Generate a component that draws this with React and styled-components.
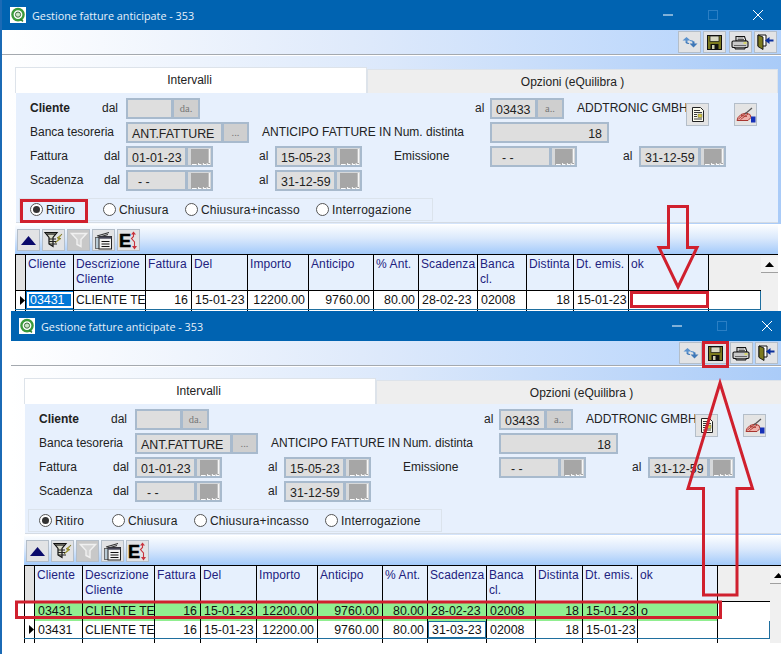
import React from "react";
import styled, { createGlobalStyle } from "styled-components";

const Global = createGlobalStyle`
  html, body { margin: 0; padding: 0; background: #fff; }
  body { font-family: "Liberation Sans", Arial, sans-serif; font-size: 12px; color: #222; }
`;

const Desktop = styled.div`
  position: relative;
  width: 781px;
  height: 654px;
  overflow: hidden;
  background: #fff;
`;

const WindowFrame = styled.div`
  position: absolute;
  left: ${(p) => p.$left}px;
  top: ${(p) => p.$top}px;
  width: 781px;
  height: ${(p) => p.$height}px;
  box-sizing: border-box;
  background: #fff;
  border-left: 2px solid #1b6ab5;
  overflow: hidden;
  ${(p) => p.$clip && "clip-path: inset(0 0 0 2px);"}
`;

const TitleBar = styled.div`
  height: 30px;
  background: #0063b1;
  display: flex;
  align-items: center;
  padding-left: 8px;
  color: #e8f1fa;
  font-family: "Open Sans", "Noto Sans", sans-serif;
  font-size: 10.8px;
`;

const TitleText = styled.span`
  margin-left: 6px;
  flex: 1;
`;

const WinControls = styled.div`
  display: flex;
  align-items: center;
  width: 118px;
`;

const WinControl = styled.svg`
  width: 10px;
  height: 10px;
  margin-right: 35px;
  flex: none;
  overflow: visible;
`;

const TopBar = styled.div`
  height: 25px;
  box-sizing: border-box;
  border-bottom: 1px solid #a4a9af;
  background: linear-gradient(90deg, #ffffff 0%, #dfeafb 45%, #b2d2fc 100%);
  display: flex;
  justify-content: flex-end;
  align-items: center;
  gap: 2.3px;
  padding-right: ${(p) => p.$right}px;
`;

const ToolButton = styled.div`
  width: 23px;
  height: 22px;
  box-sizing: border-box;
  background: ${(p) => (p.$disabled ? "#c8c8c8" : "#e2e3e5")};
  border: 1px solid #b4bec9;
  display: flex;
  align-items: center;
  justify-content: center;
  flex: none;
`;

const Body = styled.div`
  background: linear-gradient(90deg, #ffffff 0%, #dbe8fb 50%, #a9cbf8 100%) top / 100% 168px no-repeat;
  border-top: 1px solid #fff;
  padding: 11px 3px 0 13px;
`;

const Tabs = styled.div`
  display: flex;
  align-items: flex-end;
  height: 26px;
`;

const Tab = styled.div`
  height: ${(p) => (p.$active ? 26 : 24)}px;
  width: ${(p) => (p.$active ? "352px" : "auto")};
  flex: ${(p) => (p.$active ? "none" : 1)};
  box-sizing: border-box;
  background: ${(p) => (p.$active ? "#fff" : "#eeeeee")};
  border: 1px solid #dde3ea;
  border-bottom: none;
  padding-top: 5px;
  padding-right: ${(p) => (p.$active ? 3 : 0)}px;
  text-align: center;
  color: #222;
`;

const Panel = styled.div`
  height: 130px;
  box-sizing: border-box;
  margin-left: 1px;
  background: #e7f0fd;
  border-bottom: 1px solid #d4dbe4;
  padding: 5px 0 0 3px;
`;

const FormRow = styled.div`
  height: 24px;
  display: flex;
  align-items: flex-start;
`;

const Label = styled.span`
  width: ${(p) => p.$w}px;
  flex: none;
  line-height: 20px;
  font-weight: ${(p) => (p.$bold ? "bold" : "normal")};
  white-space: nowrap;
  padding-left: ${(p) => p.$pad || 0}px;
  box-sizing: border-box;
`;

const Field = styled.div`
  width: ${(p) => p.$w}px;
  height: 21px;
  flex: none;
  box-sizing: border-box;
  background: #dedede;
  border: 2px solid #a8bacd;
  line-height: 20px;
  padding: 0 ${(p) => (p.$right ? 5 : 4)}px 0 ${(p) => (p.$dash ? 10 : 4)}px;
  font-size: 12.4px;
  color: #222;
  white-space: nowrap;
  overflow: hidden;
  text-align: ${(p) => (p.$right ? "right" : "left")};
`;

const LookupButton = styled.div`
  width: ${(p) => p.$w}px;
  height: 21px;
  flex: none;
  box-sizing: border-box;
  background: #cfcfcf;
  border: 2px solid #a8bacd;
  border-left-width: 1px;
  text-align: center;
  line-height: 18px;
  font-family: "Liberation Serif", serif;
  font-size: 10.5px;
  color: #777;
`;

const CalendarButton = styled.div`
  width: 26px;
  height: 21px;
  flex: none;
  box-sizing: border-box;
  background: #d6d8da;
  border: 2px solid #a8bacd;
  border-left-width: 1px;
  padding: 1px 1px 0 3px;
  display: flex;
`;

const IconButton = styled.div`
  width: 23px;
  height: 23px;
  flex: none;
  margin-top: 5px;
  margin-left: ${(p) => p.$ml || 0}px;
  box-sizing: border-box;
  background: #e4e4e4;
  border: 1px solid #b4bec9;
  display: flex;
  align-items: center;
  justify-content: center;
`;

const RadioBox = styled.div`
  width: 414px;
  height: 23px;
  margin-top: 4px;
  box-sizing: border-box;
  border: 1px solid #dbe3ec;
  display: flex;
  align-items: center;
`;

const RadioItem = styled.label`
  display: flex;
  align-items: center;
  width: ${(p) => p.$w}px;
  flex: none;
  padding-left: ${(p) => p.$pad || 0}px;
  box-sizing: border-box;
  letter-spacing: 0.2px;
`;

const RadioDot = styled.span`
  width: 13px;
  height: 13px;
  box-sizing: border-box;
  border-radius: 50%;
  background: #fff;
  border: 1px solid #555;
  margin-right: 3px;
  flex: none;
  display: flex;
  align-items: center;
  justify-content: center;
  &::after {
    content: "";
    width: 7px;
    height: 7px;
    border-radius: 50%;
    background: ${(p) => (p.$on ? "#333" : "transparent")};
  }
`;

const GridBar = styled.div`
  height: 29px;
  margin-top: 2px;
  box-sizing: border-box;
  background: linear-gradient(180deg, #fbfdff 0%, #dbe9fc 45%, #a3cafa 100%);
  display: flex;
  gap: 2px;
  padding: 4px 0 0 2px;
`;

const GridWrap = styled.div`
  height: ${(p) => p.$height}px;
  display: flex;
  border-top: 1px solid #000;
  overflow: hidden;
`;

const GridTable = styled.div`
  width: 746px;
  flex: none;
  background: #fff;
`;

const GridRow = styled.div`
  display: flex;
  height: ${(p) => p.$h}px;
  ${(p) => p.$line && `border-bottom: 1px solid ${p.$line};`}
`;

const Selector = styled.div`
  width: 11px;
  flex: none;
  box-sizing: border-box;
  border-left: 1px solid #000;
  border-right: 1px solid #000;
  background: ${(p) => (p.$head ? "#e2e2e2" : "#fff")};
  display: flex;
  align-items: center;
  justify-content: flex-end;
`;

const Cell = styled.div`
  width: ${(p) => p.$w}px;
  flex: none;
  box-sizing: border-box;
  border-right: 1px solid #000;
  padding: 0 ${(p) => (p.$tight ? 0 : 3)}px 0 ${(p) => (p.$tight ? 2 : 3)}px;
  white-space: nowrap;
  overflow: hidden;
  font-size: ${(p) => (p.$tight ? 12.1 : 12.4)}px;
  line-height: 18px;
  text-align: ${(p) => (p.$num ? "right" : "left")};
  background: ${(p) => (p.$bg ? p.$bg : "transparent")};
  color: #111;
`;

const HeadCell = styled(Cell)`
  background: #e6f0fd;
  color: #22227e;
  white-space: normal;
  line-height: 15px;
  padding: 2px 0 0 2px;
  font-size: 12px;
  letter-spacing: 0.1px;
`;

const HeadFiller = styled.div`
  flex: 1;
  background: #efefef;
`;

const RowFiller = styled.div`
  flex: 1;
  box-sizing: border-box;
  ${(p) => p.$line && `border-right: 1px solid ${p.$line};`}
`;

const ActiveCell = styled(Cell)`
  background: #0078d7;
  color: #fff;
  outline: 2px solid #fff;
  outline-offset: -3px;
  padding-left: 4px;
`;

const FocusCell = styled(Cell)`
  box-shadow: inset 0 0 0 1px #1f6f9f;
  padding-left: 4px;
`;

const ScrollBar = styled.div`
  width: 17px;
  flex: none;
  background: #f0f0f0;
  padding-top: 2px;
`;

const ScrollUp = styled.div`
  height: 15px;
  background: #f4f4f4;
  border-bottom: 1px solid #a0a0a0;
  display: flex;
  align-items: center;
  justify-content: center;
`;

const Overlay = styled.svg`
  position: absolute;
  left: 0;
  top: 0;
  pointer-events: none;
`;

const LogoIcon = () => (
  <svg width="16" height="16" viewBox="0 0 16 16">
    <rect width="16" height="16" fill="#fff" />
    <circle cx="8" cy="7.6" r="5.6" fill="none" stroke="#3b9a3b" strokeWidth="2.4" />
    <circle cx="8" cy="7.6" r="2.6" fill="#c9e6c4" stroke="#3f6f3f" strokeWidth="1" />
    <path d="M10 12l3 2.4" stroke="#2f7f2f" strokeWidth="1.6" />
  </svg>
);

const SyncIcon = () => (
  <svg width="16" height="14" viewBox="0 0 16 14">
    <path d="M4.5 2L0.5 5.5h3v2h2v-2h3z" fill="#5a92ce" />
    <path d="M8 5.5c1 0 3 .3 3.5 2" fill="none" stroke="#5a92ce" strokeWidth="1.2" />
    <path d="M11.5 12.5l4-4h-3v-2h-2v2h-3z" fill="#3f78b8" />
    <path d="M7 8.5c-1 0-2.5-.2-3-1.5" fill="none" stroke="#3f78b8" strokeWidth="1.2" />
  </svg>
);

const SaveIcon = () => (
  <svg width="15" height="15" viewBox="0 0 15 15">
    <rect x="0.5" y="0.5" width="14" height="14" fill="#7c7a1e" stroke="#111" />
    <rect x="3" y="1" width="9" height="5.5" fill="#d9d9c4" stroke="#111" strokeWidth="0.7" />
    <rect x="3.5" y="9" width="8" height="5.5" fill="#111" />
    <rect x="5" y="10" width="2.5" height="4" fill="#cfcfb0" />
  </svg>
);

const PrintIcon = () => (
  <svg width="18" height="15" viewBox="0 0 18 15">
    <path d="M5 6V1.5h8.5L15 6z" fill="#fff" stroke="#111" strokeWidth="1.1" />
    <path d="M6.5 3h6M6.5 4.5h6.5" stroke="#333" strokeWidth="0.8" />
    <rect x="1" y="6" width="16" height="6.5" rx="1.2" fill="#c9c9c9" stroke="#111" strokeWidth="1.1" />
    <path d="M3 10.5h12" stroke="#666" strokeWidth="1" />
    <rect x="12.5" y="7.4" width="3" height="1.2" fill="#dede30" />
    <path d="M4 12.5v1.5h10v-1.5" fill="#999" stroke="#111" />
  </svg>
);

const DoorIcon = () => (
  <svg width="17" height="16" viewBox="0 0 17 16">
    <path d="M1 1h8v11H1z" fill="#fff" stroke="#111" />
    <path d="M1 1l5 2v12.5l-5-3z" fill="#7c7a1e" stroke="#111" strokeWidth="0.9" />
    <path d="M16.5 5.5h-4V3L8 6.5 12.5 10V7.5h4z" fill="#0b2f9c" />
  </svg>
);

const TriangleUpIcon = () => (
  <svg width="15" height="9" viewBox="0 0 15 9">
    <path d="M7.5 0L15 9H0z" fill="#0a0a6b" />
  </svg>
);

const FilterEditIcon = () => (
  <svg width="19" height="18" viewBox="0 0 19 18">
    <path d="M1 1.5h12L9 6.5v9l-4-2.500V6.500z" fill="#d9d9c8" stroke="#111" strokeWidth="1.2" />
    <path d="M2.5 3h9" stroke="#111" strokeWidth="1.2" />
    <path d="M5 8h7M5 10.5h7M5 13h8" stroke="#222" strokeWidth="1.1" />
    <path d="M18 3l-5 4h2.5L11 12l6-4.500h-2.500z" fill="#e8d832" stroke="#6b6516" strokeWidth="0.6" />
  </svg>
);

const FilterIcon = () => (
  <svg width="18" height="16" viewBox="0 0 18 16">
    <path d="M1.5 1.5h15l-5.500 6v7l-4-2v-5z" fill="#d4d4d4" stroke="#f0f0f0" strokeWidth="1.4" />
  </svg>
);

const ListWindowIcon = () => (
  <svg width="19" height="19" viewBox="0 0 19 19">
    <path d="M3 5l12-3.500M2.5 7L14 3.500" stroke="#333" strokeWidth="1.1" />
    <rect x="1.5" y="6.5" width="6" height="11" fill="#b9cbd6" stroke="#555" strokeWidth="0.8" />
    <rect x="5" y="5.5" width="12.5" height="12.5" fill="#f2f2f2" stroke="#222" strokeWidth="1" />
    <rect x="5" y="5.5" width="12.5" height="2.2" fill="#445" />
    <path d="M7.5 10.5h8M7.5 13h8M7.5 15.5h8" stroke="#111" strokeWidth="1.2" />
  </svg>
);

const SortIcon = () => (
  <svg width="21" height="19" viewBox="0 0 21 19">
    <text x="1" y="16" fontFamily="Liberation Sans, sans-serif" fontWeight="900" fontSize="18" fill="#000" stroke="#000" strokeWidth="0.6">E</text>
    <path d="M15.5 0.5l-2.500 3h5z" fill="#c8323c" />
    <path d="M15.5 3v2.500l-2 2 3 3.500v4" fill="none" stroke="#c8323c" strokeWidth="1.1" />
    <path d="M16.5 18.5l2.500-3.500h-5z" fill="#c8323c" />
  </svg>
);

const DocIcon = () => (
  <svg width="12" height="15" viewBox="0 0 12 15">
    <path d="M0.5 0.5h8l3 3v11h-11z" fill="#fbfbee" stroke="#222" />
    <path d="M2 3.5h6M2 5.5h8M2 7.5h3M2 9.5h3M2 12h8" stroke="#222" strokeWidth="0.9" />
    <rect x="6" y="7" width="4" height="3.5" fill="#d8c93a" stroke="#555" strokeWidth="0.5" />
  </svg>
);

const SignIcon = () => (
  <svg width="20" height="16" viewBox="0 0 20 16">
    <path d="M1 13.5h11l3-3-1-3-4-1.500-5 1.500-3 3z" fill="#eeb0aa" stroke="#a8352f" strokeWidth="1" />
    <path d="M2.5 12L10 6M4.5 12.5L12 7M5 8.5l6 1" stroke="#a8352f" strokeWidth="0.9" />
    <path d="M9 7l7-6" stroke="#555" strokeWidth="1.2" />
    <rect x="15" y="9.5" width="4.5" height="6" fill="#1530b8" />
  </svg>
);

const CalendarGlyph = () => (
  <svg width="100%" height="100%" viewBox="0 0 20 16" preserveAspectRatio="none">
    <rect width="20" height="16" fill="#a6a6a6" />
    <path d="M19.3 0v14" fill="none" stroke="#f7f7f7" strokeWidth="1.4" />
    <path d="M1 15.5h5M8 15.5h3M13 15.5h3M17 15.5h3M8 14v2M13 14v2M17 14v2" stroke="#fff" strokeWidth="1" />
  </svg>
);

const ArrowMark = () => (
  <svg width="5" height="9" viewBox="0 0 5 9">
    <path d="M0 0l5 4.5L0 9z" fill="#000" />
  </svg>
);

const columns = [
  { w: 48, title: "Cliente" },
  { w: 72, title: "Descrizione Cliente" },
  { w: 46, title: "Fattura" },
  { w: 56, title: "Del" },
  { w: 61, title: "Importo" },
  { w: 65, title: "Anticipo" },
  { w: 45, title: "% Ant." },
  { w: 59, title: "Scadenza" },
  { w: 49, title: "Banca cl." },
  { w: 47, title: "Distinta" },
  { w: 55, title: "Dt. emis." },
  { w: 80, title: "ok" },
];

const baseRow = (scadenza, ok) => [
  { text: "03431" },
  { text: "CLIENTE TE", tight: true },
  { text: "16", num: true },
  { text: "15-01-23" },
  { text: "12200.00", num: true },
  { text: "9760.00", num: true },
  { text: "80.00", num: true },
  { text: scadenza },
  { text: "02008" },
  { text: "18", num: true },
  { text: "15-01-23" },
  { text: ok },
];

const DateField = ({ value, w = 61, dash }) => (
  <>
    <Field $w={w} $dash={dash}>{value}</Field>
    <CalendarButton><CalendarGlyph /></CalendarButton>
  </>
);

function GestioneWindow({ left, top, height, clip, gridHeight, barRight, rows }) {
  return (
    <WindowFrame $left={left} $top={top} $height={height} $clip={clip}>
      <TitleBar>
        <LogoIcon />
        <TitleText>Gestione fatture anticipate - 353</TitleText>
        <WinControls>
          <WinControl viewBox="0 0 10 10"><path d="M0 5h10" stroke="#fff" strokeWidth="1" /></WinControl>
          <WinControl viewBox="0 0 10 10"><rect x="0.5" y="0.5" width="9" height="9" fill="none" stroke="#2b7fc4" /></WinControl>
          <WinControl viewBox="0 0 10 10"><path d="M0 0l10 10M10 0L0 10" stroke="#fff" strokeWidth="1" /></WinControl>
        </WinControls>
      </TitleBar>
      <TopBar $right={barRight}>
        <ToolButton><SyncIcon /></ToolButton>
        <ToolButton><SaveIcon /></ToolButton>
        <ToolButton><PrintIcon /></ToolButton>
        <ToolButton><DoorIcon /></ToolButton>
      </TopBar>
      <Body>
        <Tabs>
          <Tab $active>Intervalli</Tab>
          <Tab>Opzioni (eQuilibra )</Tab>
        </Tabs>
        <Panel>
          <FormRow>
            <Label $w={83} $pad={11} $bold>Cliente</Label>
            <Label $w={24}>dal</Label>
            <Field $w={47} />
            <LookupButton $w={27}>da.</LookupButton>
            <Label $w={290} $pad={275}>al</Label>
            <Field $w={47}>03433</Field>
            <LookupButton $w={27}>a..</LookupButton>
            <Label $w={122} $pad={13}>ADDTRONIC GMBH</Label>
            <IconButton><DocIcon /></IconButton>
            <IconButton $ml={25}><SignIcon /></IconButton>
          </FormRow>
          <FormRow>
            <Label $w={107} $pad={11}>Banca tesoreria</Label>
            <Field $w={97}>ANT.FATTURE</Field>
            <LookupButton $w={26}>...</LookupButton>
            <Label $w={145} $pad={13}>ANTICIPO FATTURE IN</Label>
            <Label $w={96}>Num. distinta</Label>
            <Field $w={119} $right>18</Field>
          </FormRow>
          <FormRow>
            <Label $w={83} $pad={11}>Fattura</Label>
            <Label $w={24} $pad={2}>dal</Label>
            <DateField value="01-01-23" />
            <Label $w={62} $pad={46}>al</Label>
            <DateField value="15-05-23" />
            <Label $w={128} $pad={32}>Emissione</Label>
            <DateField value="- -" dash />
            <Label $w={62} $pad={46}>al</Label>
            <DateField value="31-12-59" />
          </FormRow>
          <FormRow>
            <Label $w={83} $pad={11}>Scadenza</Label>
            <Label $w={24} $pad={2}>dal</Label>
            <DateField value="- -" dash />
            <Label $w={62} $pad={46}>al</Label>
            <DateField value="31-12-59" />
          </FormRow>
          <RadioBox>
            <RadioItem $w={83} $pad={10}><RadioDot $on />Ritiro</RadioItem>
            <RadioItem $w={82}><RadioDot />Chiusura</RadioItem>
            <RadioItem $w={131}><RadioDot />Chiusura+incasso</RadioItem>
            <RadioItem $w={110}><RadioDot />Interrogazione</RadioItem>
          </RadioBox>
        </Panel>
        <GridBar>
          <ToolButton><TriangleUpIcon /></ToolButton>
          <ToolButton><FilterEditIcon /></ToolButton>
          <ToolButton $disabled><FilterIcon /></ToolButton>
          <ToolButton><ListWindowIcon /></ToolButton>
          <ToolButton><SortIcon /></ToolButton>
        </GridBar>
        <GridWrap $height={gridHeight}>
          <GridTable>
            <GridRow $h={35} $line="#000">
              <Selector $head />
              {columns.map((c) => (
                <HeadCell key={c.title} $w={c.w}>{c.title}</HeadCell>
              ))}
              <HeadFiller />
            </GridRow>
            {rows}
            <GridRow $h={10}>
              <Selector />
              {columns.map((c) => (
                <Cell key={c.title} $w={c.w} />
              ))}
            </GridRow>
          </GridTable>
          <ScrollBar>
            <ScrollUp>
              <svg width="9" height="5" viewBox="0 0 9 5"><path d="M4.5 0L9 5H0z" fill="#000" /></svg>
            </ScrollUp>
          </ScrollBar>
        </GridWrap>
      </Body>
    </WindowFrame>
  );
}

const firstWindowRows = (
  <GridRow $h={18} $line="#1f6f9f">
    <Selector><ArrowMark /></Selector>
    {baseRow("28-02-23", "").map((cell, i) =>
      i === 0 ? (
        <ActiveCell key={i} $w={columns[i].w}>{cell.text}</ActiveCell>
      ) : (
        <Cell key={i} $w={columns[i].w} $num={cell.num} $tight={cell.tight}>{cell.text}</Cell>
      )
    )}
    <RowFiller $line="#1f6f9f" />
  </GridRow>
);

const secondWindowRows = (
  <>
    <GridRow $h={19}>
      <Selector />
      {baseRow("28-02-23", "o").map((cell, i) => (
        <Cell key={i} $w={columns[i].w} $num={cell.num} $tight={cell.tight} $bg="#90ee90">{cell.text}</Cell>
      ))}
      <RowFiller />
    </GridRow>
    <GridRow $h={17} $line="#1f6f9f">
      <Selector><ArrowMark /></Selector>
      {baseRow("31-03-23", "").map((cell, i) =>
        i === 7 ? (
          <FocusCell key={i} $w={columns[i].w}>{cell.text}</FocusCell>
        ) : (
          <Cell key={i} $w={columns[i].w} $num={cell.num} $tight={cell.tight}>{cell.text}</Cell>
        )
      )}
      <RowFiller $line="#1f6f9f" />
    </GridRow>
  </>
);

export default function App() {
  const red = "#d0202e";
  return (
    <Desktop>
      <Global />
      <GestioneWindow left={0} top={0} height={654} gridHeight={60} barRight={4} rows={firstWindowRows} />
      <GestioneWindow left={9} top={311} height={343} clip gridHeight={77} barRight={12} rows={secondWindowRows} />
      <Overlay width="781" height="654" viewBox="0 0 781 654" fill="none" stroke={red} strokeWidth="3">
        <rect x="21.5" y="200.5" width="65" height="21" />
        <path d="M668.5 206.5V247.5H659L678 287L697 247.5H687.5V206.5z" />
        <rect x="631.5" y="292.5" width="76" height="14" />
        <rect x="703.5" y="342.5" width="24" height="24" />
        <path d="M720 383L688 488.5H703.5V595H737V488.5H752.5z" />
        <rect x="16.5" y="602" width="704" height="15.5" />
      </Overlay>
    </Desktop>
  );
}
